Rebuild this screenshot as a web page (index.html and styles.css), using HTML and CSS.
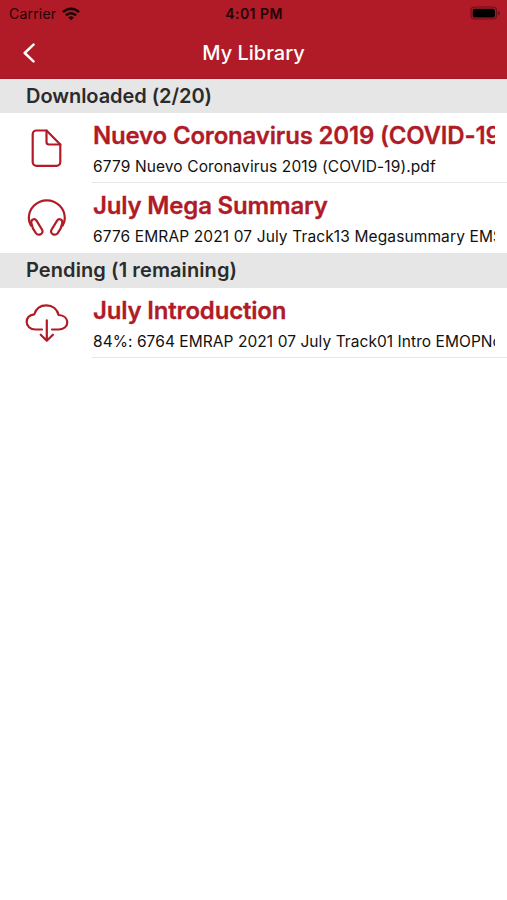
FILE: index.html
```html
<!DOCTYPE html>
<html lang="en">
<head>
    <meta charset="UTF-8">
    <meta name="viewport" content="width=device-width, initial-scale=1.0">
    <title>My Library</title>
    <link rel="stylesheet" href="styles.css">
</head>
<body>
    <header class="top">
        <div class="status-bar">
            <div class="carrier">
                <span>Carrier</span>
                <svg class="wifi" width="18" height="14" viewBox="0 0 18 14" fill="none" stroke="#1c0305" stroke-width="2.5">
                    <path d="M1 5.2C5.6 .6 12.4 .6 17 5.2"/>
                    <path d="M4 8.3C6.8 5.4 11.2 5.4 14 8.3"/>
                    <path d="M6.3 10.5C7.9 8.9 10.1 8.9 11.7 10.5L9 13.2Z" fill="#1c0305" stroke="none"/>
                </svg>
            </div>
            <div class="time">4:01 PM</div>
            <div class="battery">
                <svg width="31" height="15" viewBox="0 0 31 15">
                    <rect x="1" y="1" width="25.5" height="12" rx="3.5" fill="none" stroke="#6d1018" stroke-width="1.2"/>
                    <rect x="2.7" y="2.7" width="22.2" height="8.8" rx="2" fill="#000"/>
                    <path d="M28 5v4.4c1.4-.7 2-1.4 2-2.2s-.6-1.5-2-2.2z" fill="#6d1018"/>
                </svg>
            </div>
        </div>
        <nav class="nav-bar">
            <svg class="back" width="12" height="22" viewBox="0 0 12 22" fill="none" stroke="#fff" stroke-width="2.5" stroke-linecap="round" stroke-linejoin="round">
                <path d="M10.5 2.7L1.7 11l8.8 8.3"/>
            </svg>
            <h1 class="nav-title">My Library</h1>
        </nav>
    </header>

    <main>
        <h2 class="section-title">Downloaded (2/20)</h2>
        <div class="row">
            <svg class="icon" viewBox="0 0 44 44">
                <path d="M11.5 4.5H21.500L35.3 18.500V36a3.8 3.8 0 0 1-3.8 3.8H11.5A3.8 3.8 0 0 1 7.7 36V8.3A3.8 3.8 0 0 1 11.5 4.5Z"/>
                <path d="M21.5 4.5V16a2.5 2.5 0 0 0 2.5 2.5H35.3"/>
            </svg>
            <div class="text">
                <div class="title">Nuevo Coronavirus 2019 (COVID-19)</div>
                <div class="file">6779 Nuevo Coronavirus 2019 (COVID-19).pdf</div>
            </div>
        </div>
        <div class="row last">
            <svg class="icon" viewBox="0 0 44 44">
                <path d="M5.9 29.5C4.500 27 3.8 25 3.8 22.300A18 18 0 0 1 39.8 22.300C39.8 25 39.1 27 37.7 29.5"/>
                <path d="M6.3 27c-.6-3.2 3.2-5.2 5.2-2.4l5.6 9.2c2.2 4-3.600 6.6-6.3 3.3C8.5 34.5 7 31 6.3 27Z"/>
                <path d="M37.3 27c.6-3.2-3.2-5.2-5.2-2.400l-5.6 9.2c-2.2 4 3.6 6.6 6.3 3.3C35.1 34.5 36.6 31 37.3 27Z"/>
            </svg>
            <div class="text">
                <div class="title">July Mega Summary</div>
                <div class="file">6776 EMRAP 2021 07 July Track13 Megasummary EMS</div>
            </div>
        </div>

        <h2 class="section-title pending">Pending (1 remaining)</h2>
        <div class="row">
            <svg class="icon" viewBox="0 0 44 44">
                <path d="M17 28.5H10.5C5 28.5 1.7 25 1.7 21c0-4.5 3.3-7.2 7.6-7.7C11 7.8 15.5 4.3 21.3 4.3c6.5 0 11 4 12.3 9.7 5.2.3 8.7 3.3 8.7 7.3 0 4.3-3.8 7.2-8.8 7.2H27"/>
                <path d="M21.8 19.3V39.5M15.7 33.7l6.1 6 6.1-6"/>
            </svg>
            <div class="text">
                <div class="title">July Introduction</div>
                <div class="file file-pending">84%: 6764 EMRAP 2021 07 July Track01 Intro EMOPNo</div>
            </div>
        </div>
    </main>
</body>
</html>
```

FILE: styles.css
```css
* {
    box-sizing: border-box;
}

body {
    margin: 0;
    background-color: #fff;
    color: #111;
    font-family: Inter, "Liberation Sans", sans-serif;
}

.top {
    height: 79px;
    background-color: #b01b27;
    border-bottom: 1px solid #a01b27;
}

.status-bar {
    display: grid;
    grid-template-columns: 1fr auto 1fr;
    align-items: center;
    height: 27px;
    padding: 0 6px 0 9px;
    color: #210406;
    font-size: 14px;
}

.carrier {
    display: flex;
    align-items: center;
    gap: 6px;
    letter-spacing: 0.2px;
}

.time {
    font-weight: 600;
    letter-spacing: 0.45px;
    margin-left: -2px;
}

.battery {
    display: flex;
    justify-content: flex-end;
}

.nav-bar {
    display: grid;
    grid-template-columns: 1fr auto 1fr;
    align-items: center;
    height: 51px;
    padding: 0 23px;
    color: #fff;
}

.nav-title {
    margin: 0;
    font-size: 20px;
    font-weight: 500;
}

/* grey section bars */
.section-title {
    height: 34px;
    margin: 0;
    padding-left: 26px;
    background-color: #e6e6e6;
    color: #2b2b2b;
    font-size: 20px;
    font-weight: 600;
    letter-spacing: -0.05px;
    line-height: 35px;
}

.pending {
    height: 35px;
    letter-spacing: 0.1px;
}

.row {
    display: flex;
    align-items: center;
    height: 70px;
    padding-left: 25px;
}

.icon {
    flex: none;
    width: 44px;
    height: 44px;
    fill: none;
    stroke: #b01b27;
    stroke-width: 2.2;
    stroke-linecap: round;
    stroke-linejoin: round;
}

.text {
    flex: 1;
    min-width: 0;
    height: 70px;
    margin-left: 23px;
    padding: 7px 12px 0 1px;
    border-bottom: 1px solid #e6e6e6;
}

.last .text {
    border-bottom: none;
}

.title,
.file {
    overflow: hidden;
    white-space: nowrap;
}

.title {
    color: #b01b27;
    font-size: 24px;
    font-weight: 600;
    letter-spacing: -0.18px;
    line-height: 32px;
    -webkit-text-stroke: 0.3px #b01b27;
}

.file {
    font-size: 15.5px;
    letter-spacing: 0.12px;
    line-height: 29px;
}

.file-pending {
    letter-spacing: 0.06px;
}
```
